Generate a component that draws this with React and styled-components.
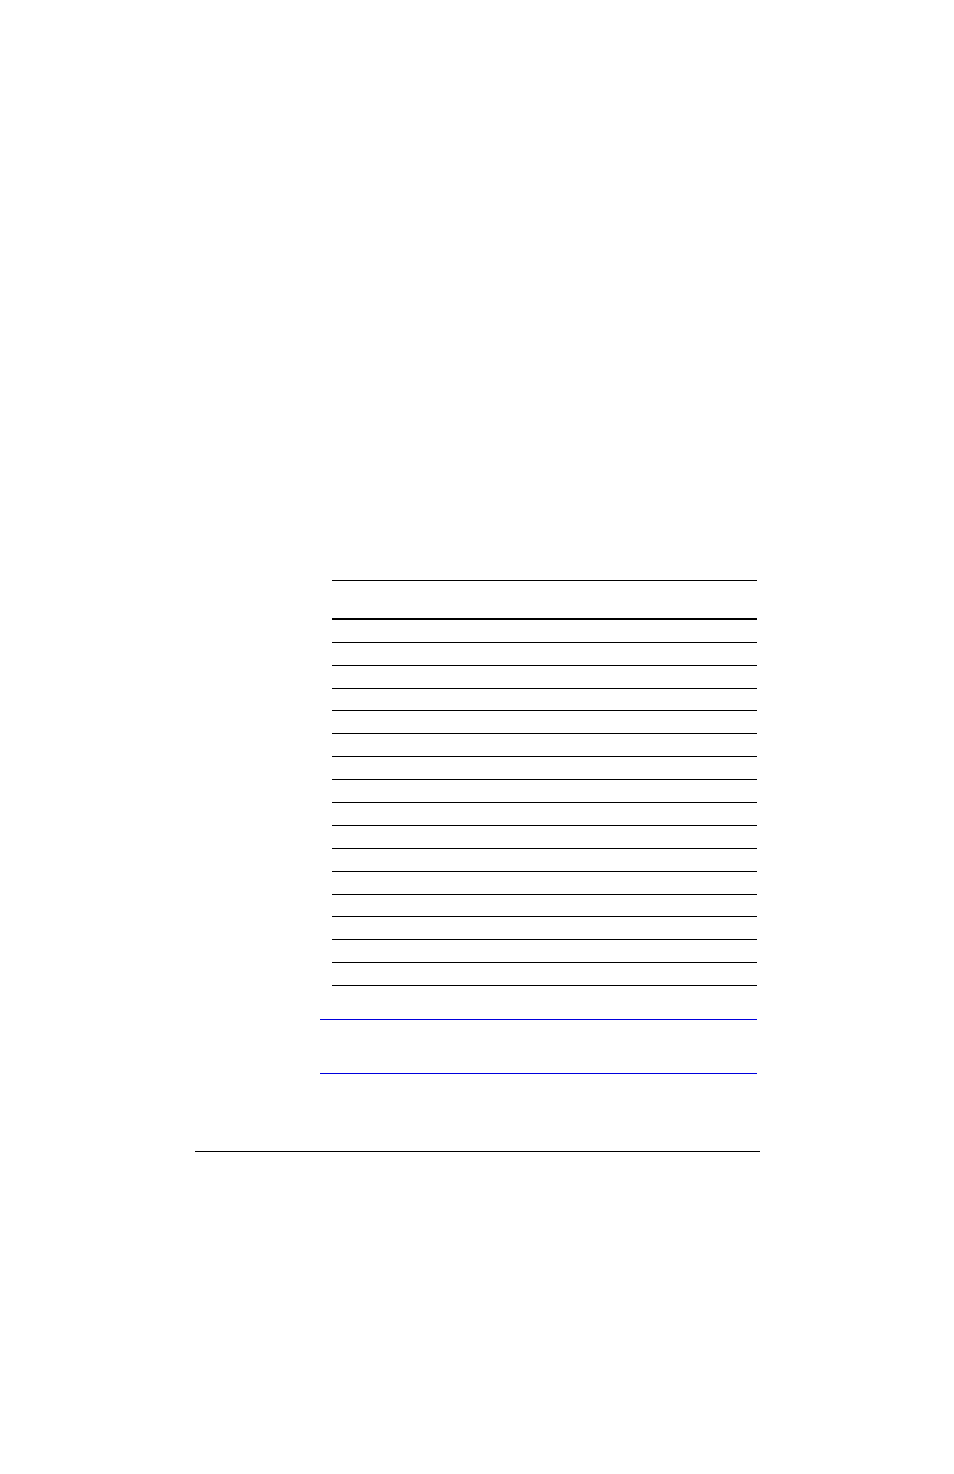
import React from 'react';
import styled, { createGlobalStyle } from 'styled-components';

const GlobalStyle = createGlobalStyle`
  html, body {
    margin: 0;
    padding: 0;
    background: #ffffff;
    font-family: "Liberation Serif", "Times New Roman", serif;
  }
`;

const Page = styled.div`
  width: 954px;
  min-height: 1474px;
  padding-top: 580px;
  box-sizing: border-box;
  display: flex;
  flex-direction: column;
`;

const Table = styled.div`
  margin-left: 332px;
  width: 425px;
  display: flex;
  flex-direction: column;
  border-top: 1px solid #000;
`;

const HeaderRow = styled.div`
  height: 37px;
  border-bottom: 2px solid #000;
`;

const Row = styled.div`
  height: ${(p) => p.$h}px;
  border-bottom: 1px solid #000;
`;

const Note = styled.div`
  margin-top: 33px;
  margin-left: 320px;
  width: 437px;
  height: 53px;
  border-top: 1px solid #0000dd;
  border-bottom: 1px solid #0000dd;
`;

const Footer = styled.div`
  margin-top: 77px;
  margin-left: 195px;
  width: 565px;
  border-top: 1px solid #000;
`;

const rowHeights = [22, 22, 22, 21, 22, 22, 22, 22, 22, 22, 22, 22, 21, 22, 22, 22];

const App = () => (
  <>
    <GlobalStyle />
    <Page>
      <Table>
        <HeaderRow />
        {rowHeights.map((h, i) => (
          <Row key={i} $h={h} />
        ))}
      </Table>
      <Note />
      <Footer />
    </Page>
  </>
);

export default App;
